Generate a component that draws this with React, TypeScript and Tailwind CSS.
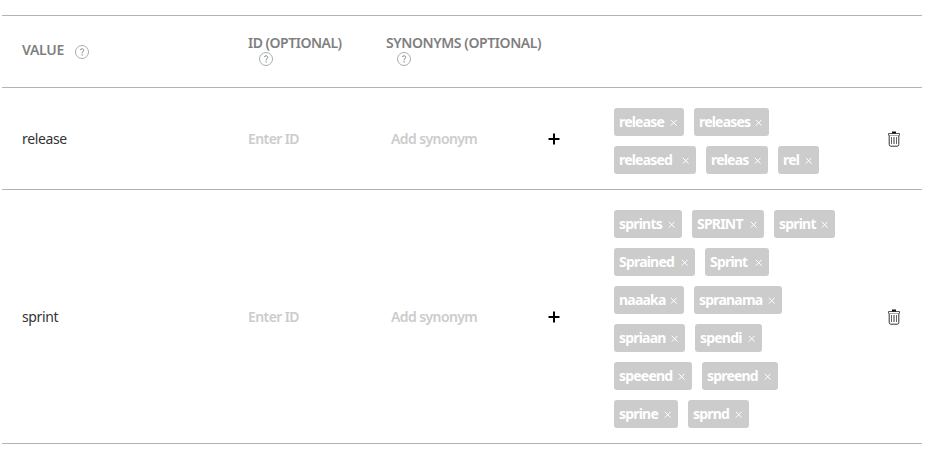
import clsx from "clsx";

interface Tag {
  label: string;
  size: string;
}

interface SlotValue {
  value: string;
  height: string;
  tags: Tag[][];
}

const slotValues: SlotValue[] = [
  {
    value: "release",
    height: "h-[102px]",
    tags: [
      [
        { label: "release", size: "w-[70px]" },
        { label: "releases", size: "w-[75px]" },
      ],
      [
        { label: "released", size: "w-[82px]" },
        { label: "releas", size: "w-[62px]" },
        { label: "rel", size: "w-[41px]" },
      ],
    ],
  },
  {
    value: "sprint",
    height: "h-[254px]",
    tags: [
      [
        { label: "sprints", size: "w-[68px]" },
        { label: "SPRINT", size: "w-[72px]" },
        { label: "sprint", size: "w-[61px]" },
      ],
      [
        { label: "Sprained", size: "w-[81px]" },
        { label: "Sprint", size: "w-[64px]" },
      ],
      [
        { label: "naaaka", size: "w-[70px]" },
        { label: "spranama", size: "w-[88px]" },
      ],
      [
        { label: "spriaan", size: "w-[71px]" },
        { label: "spendi", size: "w-[67px]" },
      ],
      [
        { label: "speeend", size: "w-[78px]" },
        { label: "spreend", size: "w-[76px]" },
      ],
      [
        { label: "sprine", size: "w-[64px]" },
        { label: "sprnd", size: "w-[61px]" },
      ],
    ],
  },
];

const columns = "grid grid-cols-[226px_138px_158px_70px_274px_34px] pl-5";

function HelpIcon({ className }: { className?: string }) {
  return (
    <svg viewBox="0 0 14 14" className={clsx("h-[14px] w-[14px] shrink-0", className)} fill="none">
      <circle cx="7" cy="7" r="6.5" stroke="#a3aeb0" />
      <path d="M5.3 5.1C5.5 4.2 6.2 3.8 7 3.8C8 3.8 8.7 4.3 8.7 5.2C8.7 6.4 7.2 6.5 7.2 8.3" stroke="#858585" />
      <path d="M6.6 9.2H7.7V10.4H6.6Z" fill="#858585" />
    </svg>
  );
}

function PlusIcon() {
  return (
    <svg viewBox="0 0 12 12" className="h-3 w-3" fill="none" stroke="#000" strokeWidth="2">
      <path d="M6 0.5V11.5M0.5 6H11.5" />
    </svg>
  );
}

function TrashIcon() {
  return (
    <svg viewBox="0 0 12 16" className="h-4 w-3" fill="none">
      <path d="M0.5 4.5V2.5H11.5V4.5" stroke="#555" />
      <path d="M4 1.5H8" stroke="#111" strokeWidth="2" />
      <path d="M1 4.5H11" stroke="#aaa" />
      <path d="M1.2 4.5V13.5Q1.2 15.2 2.8 15.2H9.2Q10.8 15.2 10.8 13.5V4.5" stroke="#333" />
      <path d="M3.5 6V13M8.5 6V13" stroke="#555" strokeWidth="0.9" />
      <path d="M6 6V13" stroke="#222" strokeWidth="0.9" />
    </svg>
  );
}

function SynonymTag({ label, size }: Tag) {
  return (
    <span
      className={clsx(
        "flex h-7 items-center justify-between rounded-[3px] bg-[#cccccc] pr-[7px] pl-[5px] text-sm font-bold tracking-[-0.8px] text-white",
        size
      )}
    >
      <span>{label}</span>
      <svg viewBox="0 0 7 7" className="mt-0.5 h-[7px] w-[7px] shrink-0" fill="none" stroke="#fff">
        <path d="M0.8 0.8L6.6 6.6M6.6 0.8L0.8 6.6" />
      </svg>
    </span>
  );
}

function TableHeader() {
  return (
    <div className={clsx(columns, "h-[73px] border-y border-[#b3b3b3] text-sm leading-4 font-semibold text-[#7f7f7f]")}>
      <div className="flex items-start pt-[26px]">
        <span className="w-[42px] tracking-[-0.3px]">VALUE</span>
        <HelpIcon className="mt-[3px] ml-[11px]" />
      </div>
      <div className="pt-[19px]">
        <div className="tracking-[-0.5px]">ID (OPTIONAL)</div>
        <HelpIcon className="mt-px ml-[11px]" />
      </div>
      <div className="pt-[19px]">
        <div className="tracking-[-0.42px] whitespace-nowrap">SYNONYMS (OPTIONAL)</div>
        <HelpIcon className="mt-px ml-[11px]" />
      </div>
    </div>
  );
}

function TableRow({ value, height, tags }: SlotValue) {
  return (
    <div className={clsx(columns, "items-center border-b border-[#b3b3b3] text-sm", height)}>
      <div className="tracking-[-0.35px] text-[#333]">{value}</div>
      <div className="font-semibold tracking-[-0.6px] text-[#cccccc]">Enter ID</div>
      <div className="pl-[5px] font-semibold tracking-[-0.6px] text-[#cccccc]">Add synonym</div>
      <div className="pl-1">
        <PlusIcon />
      </div>
      <div className="flex flex-col gap-2.5 pt-1">
        {tags.map((line, i) => (
          <div key={i} className="flex gap-2.5">
            {line.map((tag) => (
              <SynonymTag key={tag.label} {...tag} />
            ))}
          </div>
        ))}
      </div>
      <TrashIcon />
    </div>
  );
}

export default function App() {
  return (
    <div className="h-[463px] bg-white pt-[15px] pl-0.5 font-['Noto_Sans',sans-serif]">
      <div className="w-[920px]">
        <TableHeader />
        {slotValues.map((item) => (
          <TableRow key={item.value} {...item} />
        ))}
      </div>
    </div>
  );
}
